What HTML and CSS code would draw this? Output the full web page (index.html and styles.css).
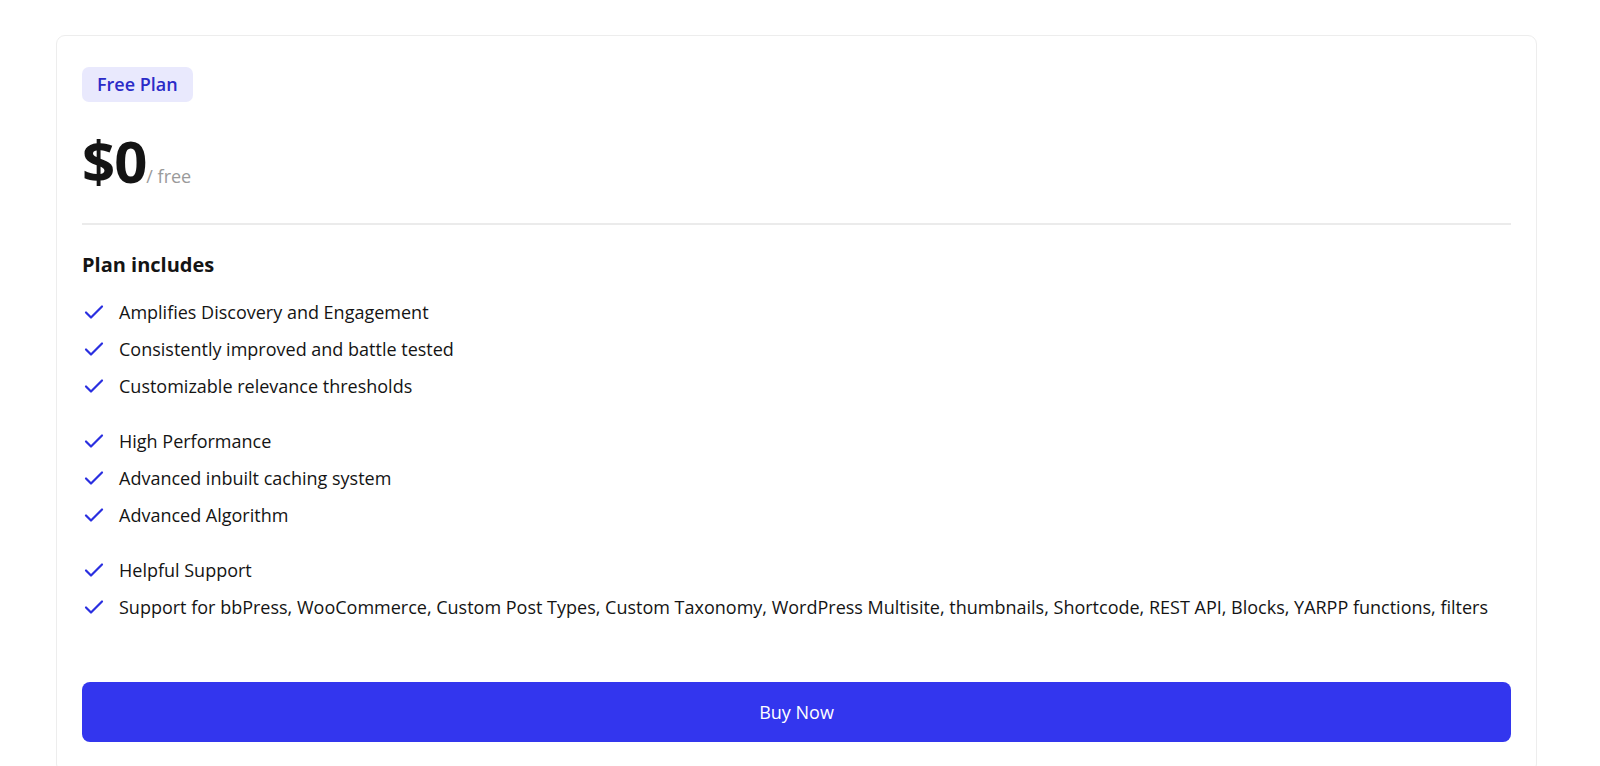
FILE: index.html
```html
<!DOCTYPE html>
<html lang="en">

<head>
    <meta charset="UTF-8">
    <meta name="viewport" content="width=device-width, initial-scale=1.0">
    <title>Pricing</title>
    <link rel="stylesheet" href="styles.css">
</head>

<body>
    <div class="plan-card">
        <span class="plan-badge">Free Plan</span>

        <div class="plan-price">
            <span class="amount">$0</span>
            <span class="period">/ free</span>
        </div>

        <h3 class="plan-title">Plan includes</h3>

        <ul class="feature-group">
            <li><svg class="check" viewBox="0 0 20 20"><path d="M2 10.5l5 5L18 4.5"/></svg>Amplifies Discovery and Engagement</li>
            <li><svg class="check" viewBox="0 0 20 20"><path d="M2 10.5l5 5L18 4.5"/></svg>Consistently improved and battle tested</li>
            <li><svg class="check" viewBox="0 0 20 20"><path d="M2 10.5l5 5L18 4.5"/></svg>Customizable relevance thresholds</li>
        </ul>
        <ul class="feature-group">
            <li><svg class="check" viewBox="0 0 20 20"><path d="M2 10.5l5 5L18 4.5"/></svg>High Performance</li>
            <li><svg class="check" viewBox="0 0 20 20"><path d="M2 10.5l5 5L18 4.5"/></svg>Advanced inbuilt caching system</li>
            <li><svg class="check" viewBox="0 0 20 20"><path d="M2 10.5l5 5L18 4.5"/></svg>Advanced Algorithm</li>
        </ul>
        <ul class="feature-group">
            <li><svg class="check" viewBox="0 0 20 20"><path d="M2 10.5l5 5L18 4.5"/></svg>Helpful Support</li>
            <li><svg class="check" viewBox="0 0 20 20"><path d="M2 10.5l5 5L18 4.5"/></svg>Support for bbPress, WooCommerce, Custom Post Types, Custom Taxonomy, WordPress Multisite, thumbnails, Shortcode, REST API, Blocks, YARPP functions, filters</li>
        </ul>

        <a class="buy-btn" href="#">Buy Now</a>
    </div>
</body>

</html>
```

FILE: styles.css
```css
* {
    margin: 0;
    padding: 0;
    box-sizing: border-box;
}

body {
    background-color: #fff;
    font-family: "Open Sans", "Noto Sans", sans-serif;
    color: #141414;
    padding: 35px 0 0 56px;
}

ul,
li {
    list-style: none;
}

.plan-card {
    width: 1481px;
    border: 1px solid #ededed;
    border-radius: 9px;
    padding: 31px 25px 30px;
}

.plan-badge {
    display: inline-block;
    height: 35px;
    line-height: 35px;
    padding: 0 15px;
    border-radius: 7px;
    background-color: #e9e9fd;
    color: #2b2bc8;
    font-size: 18px;
    font-weight: 600;
}

.plan-price {
    display: flex;
    align-items: baseline;
    margin-top: 25px;
    padding-bottom: 28px;
    border-bottom: 2px solid #ebebeb;
}

.plan-price .amount {
    font-size: 58px;
    font-weight: 700;
    line-height: 68px;
    letter-spacing: -1px;
}

.plan-price .period {
    font-size: 18px;
    color: #9a9a9a;
}

.plan-title {
    margin-top: 26px;
    font-size: 20px;
    font-weight: 700;
}

.feature-group {
    margin-top: 18px;
}

.plan-title + .feature-group {
    margin-top: 15px;
}

.feature-group li {
    display: flex;
    align-items: center;
    height: 37px;
    font-size: 18px;
}

.check {
    width: 20px;
    height: 20px;
    margin: 0 15px 0 2px;
    fill: none;
    stroke: #2a2fe0;
    stroke-width: 2.2;
    stroke-linecap: round;
    stroke-linejoin: round;
}

.buy-btn {
    display: block;
    margin-top: 57px;
    height: 60px;
    line-height: 60px;
    border-radius: 8px;
    background-color: #3336ee;
    color: #fff;
    text-align: center;
    font-size: 18px;
    text-decoration: none;
}
```
